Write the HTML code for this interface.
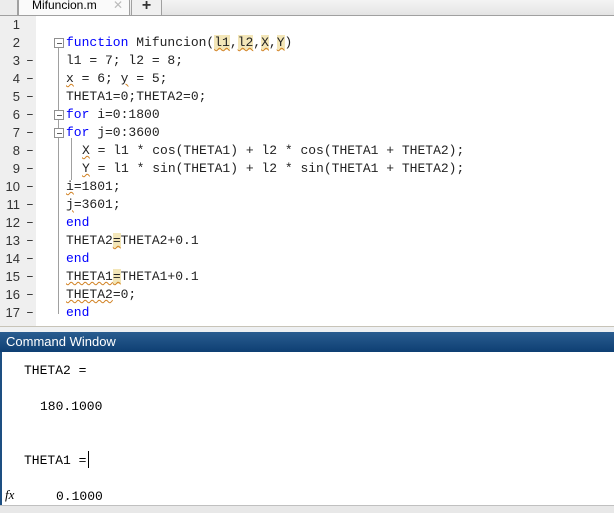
<!DOCTYPE html>
<html><head><style>
body{margin:0;width:614px;height:512px;overflow:hidden;background:#fff;font-family:"Liberation Sans",sans-serif;position:relative}
.tabbar{position:absolute;left:0;top:0;width:614px;height:15px;background:linear-gradient(#f4f4f4,#e4e4e4);border-bottom:1px solid #a0a0a0}
.tab{position:absolute;top:-2px;height:16px;background:#fafafa;border:1px solid #a0a0a0;border-bottom:none;border-radius:3px 3px 0 0;font-size:12px;line-height:13px}
.gut{position:absolute;left:0;top:16px;width:36px;height:310px;background:#efefef}
.code{position:absolute;left:0;top:16px;font-family:"Liberation Mono",monospace;font-size:13px;color:#222}
.ln{position:absolute;height:18px;line-height:18px;white-space:pre}
.num{position:absolute;width:20px;text-align:right;color:#333;font-family:"Liberation Sans",sans-serif;font-size:13px;line-height:18px}
.k{color:#0000ff}
.h{background:#f3e6b8}
.w{text-decoration:underline wavy #d08020;text-decoration-thickness:1px}
.fold{position:absolute;left:58px;width:1px;background:#a0a0a0}
.box{position:absolute;left:54px;width:8px;height:8px;border:1px solid #909090;background:#fff}
.box:after{content:"";position:absolute;left:2px;top:4px;width:5px;height:1px;background:#606060}
.cw{position:absolute;left:0;top:332px;width:614px;height:20px;background:linear-gradient(#2a5d90,#0e3f73);color:#fff;font-size:13px;line-height:20px;padding-left:6px;box-sizing:border-box}
.sep{position:absolute;left:0;top:326px;width:614px;height:6px;background:#eef0f2;border-top:1px solid #c8c4b8}
.cmd{position:absolute;font-family:"Liberation Mono",monospace;font-size:13px;white-space:pre;color:#000}
</style></head><body>
<div class="tabbar"></div>
<div class="tab" style="left:-4px;width:20px;background:#ececec"></div>
<div class="tab" style="left:18px;width:110px"><span style="position:absolute;left:13px;top:0">Mifuncion.m</span><span style="position:absolute;left:94px;top:0;color:#bbb">✕</span></div>
<div class="tab" style="left:131px;width:29px;background:#f0f0f0;text-align:center;font-size:16px;font-weight:bold;line-height:14px;color:#333">+</div>
<div class="gut"></div>
<div class="fold" style="top:48px;height:266px"></div>
<div class="fold" style="left:71px;top:138px;height:42px"></div>
<div class="box" style="top:38px"></div>
<div class="box" style="top:110px"></div>
<div class="box" style="top:128px"></div>
<div class="code">
<div class="num" style="top:0">1</div>
<div class="num" style="top:18px">2</div><div class="ln" style="left:66px;top:18px"><span class="k">function</span> Mifuncion(<span class="h w">l1</span>,<span class="h w">l2</span>,<span class="h w">X</span>,<span class="h w">Y</span>)</div>
<div class="num" style="top:36px">3</div><div class="ln" style="left:66px;top:36px">l1 = 7; l2 = 8;</div>
<div class="num" style="top:54px">4</div><div class="ln" style="left:66px;top:54px"><span class="w">x</span> = 6; <span class="w">y</span> = 5;</div>
<div class="num" style="top:72px">5</div><div class="ln" style="left:66px;top:72px">THETA1=0;THETA2=0;</div>
<div class="num" style="top:90px">6</div><div class="ln" style="left:66px;top:90px"><span class="k">for</span> i=0:1800</div>
<div class="num" style="top:108px">7</div><div class="ln" style="left:66px;top:108px"><span class="k">for</span> j=0:3600</div>
<div class="num" style="top:126px">8</div><div class="ln" style="left:82px;top:126px"><span class="w">X</span> = l1 * cos(THETA1) + l2 * cos(THETA1 + THETA2);</div>
<div class="num" style="top:144px">9</div><div class="ln" style="left:82px;top:144px"><span class="w">Y</span> = l1 * sin(THETA1) + l2 * sin(THETA1 + THETA2);</div>
<div class="num" style="top:162px">10</div><div class="ln" style="left:66px;top:162px"><span class="w">i</span>=1801;</div>
<div class="num" style="top:180px">11</div><div class="ln" style="left:66px;top:180px"><span class="w">j</span>=3601;</div>
<div class="num" style="top:198px">12</div><div class="ln" style="left:66px;top:198px"><span class="k">end</span></div>
<div class="num" style="top:216px">13</div><div class="ln" style="left:66px;top:216px">THETA2<span class="h w">=</span>THETA2+0.1</div>
<div class="num" style="top:234px">14</div><div class="ln" style="left:66px;top:234px"><span class="k">end</span></div>
<div class="num" style="top:252px">15</div><div class="ln" style="left:66px;top:252px"><span class="w">THETA1</span><span class="h w">=</span>THETA1+0.1</div>
<div class="num" style="top:270px">16</div><div class="ln" style="left:66px;top:270px"><span class="w">THETA2</span>=0;</div>
<div class="num" style="top:288px">17</div><div class="ln" style="left:66px;top:288px"><span class="k">end</span></div>
</div>
<div class="code" style="color:#222">
<div class="ln" style="left:26px;top:36px">–</div><div class="ln" style="left:26px;top:54px">–</div><div class="ln" style="left:26px;top:72px">–</div><div class="ln" style="left:26px;top:90px">–</div><div class="ln" style="left:26px;top:108px">–</div><div class="ln" style="left:26px;top:126px">–</div><div class="ln" style="left:26px;top:144px">–</div><div class="ln" style="left:26px;top:162px">–</div><div class="ln" style="left:26px;top:180px">–</div><div class="ln" style="left:26px;top:198px">–</div><div class="ln" style="left:26px;top:216px">–</div><div class="ln" style="left:26px;top:234px">–</div><div class="ln" style="left:26px;top:252px">–</div><div class="ln" style="left:26px;top:270px">–</div><div class="ln" style="left:26px;top:288px">–</div>
</div>
<div class="sep"></div>
<div class="cw">Command Window</div>
<div style="position:absolute;left:0;top:352px;width:2px;height:154px;background:#1d4f82"></div>
<div style="position:absolute;left:0;top:505px;width:614px;height:7px;background:#e8e8e8;border-top:1px solid #c0c0c0"></div>
<div class="cmd" style="left:24px;top:363px">THETA2 =</div>
<div class="cmd" style="left:40px;top:399px">180.1000</div>
<div class="cmd" style="left:24px;top:453px">THETA1 =</div>
<div style="position:absolute;left:88px;top:451px;width:1px;height:17px;background:#000"></div>
<div class="cmd" style="left:56px;top:489px">0.1000</div>
<div style="position:absolute;left:5px;top:487px;font-family:'Liberation Serif',serif;font-style:italic;font-size:13px">fx</div>
</body></html>
